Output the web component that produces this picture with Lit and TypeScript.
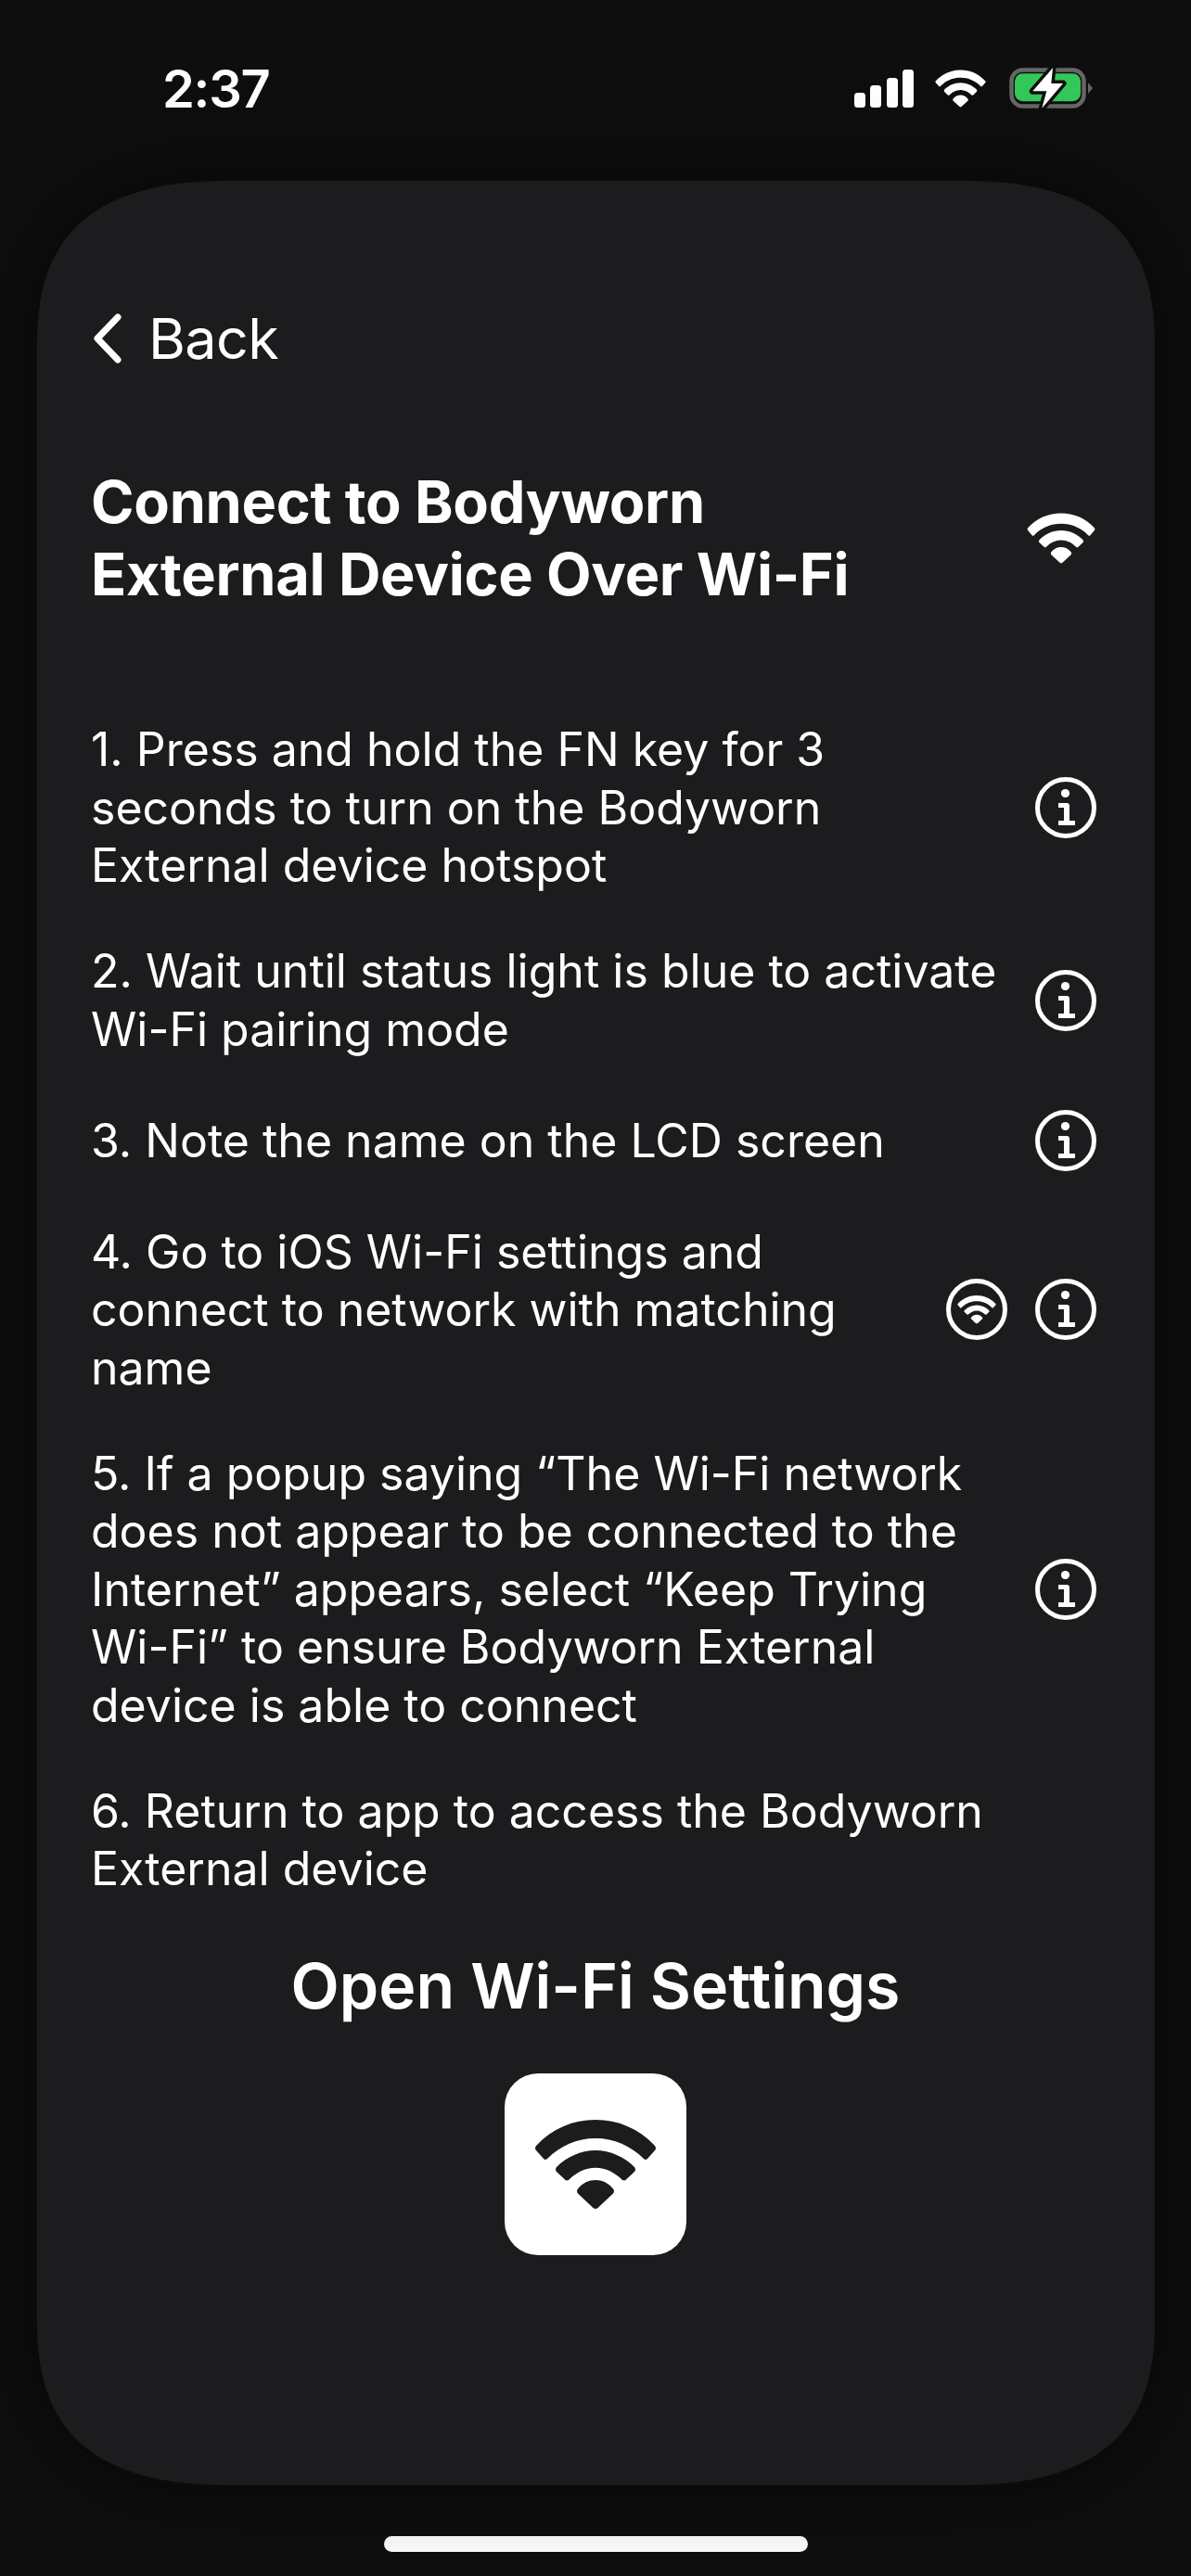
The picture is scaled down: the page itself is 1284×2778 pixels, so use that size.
import { LitElement, css, html, svg } from "lit";
import { customElement } from "lit/decorators.js";

const WIFI_PATHS = svg`
  <path d="M2 28C20 9 42 0 66 0C90 0 112 9 130 28Q132 31 130 33L122 42Q120 44 118 42C104 28 86 20 66 20C46 20 28 28 14 42Q12 44 10 42L2 33Q0 31 2 28Z"/>
  <path d="M24 51C35 40 50 33 66 33C82 33 97 40 108 51Q110 54 108 56L99 64.5Q97 66.5 94.5 64.5C87 57 77 51.7 66 51.7C55 51.7 45 57 37.5 64.5Q35 66.5 33 64.5L24 56Q22 54 24 51Z"/>
  <path d="M47 74.5C52 68 59 65 66 65C73 65 80 68 85 74.5Q87 77 85 79.5L68.5 95Q66 97 63.5 95L47 79.5Q45 77 47 74.5Z"/>
`;

const wifi = (cls: string) =>
  html`<svg class=${cls} viewBox="0 0 132 96" fill="currentColor">${WIFI_PATHS}</svg>`;

const infoIcon = html`<svg class="round" viewBox="0 0 66 66" fill="none">
  <circle cx="33" cy="33" r="30.5" stroke="currentColor" stroke-width="5"/>
  <circle cx="32.5" cy="17.5" r="4.6" fill="currentColor"/>
  <path d="M25 28H34Q37 28 37 31V47H43V52H25V47H31V33H25Z" fill="currentColor"/>
</svg>`;

const wifiRound = html`<svg class="round" viewBox="0 0 66 66" fill="none">
  <circle cx="33" cy="33" r="30.5" stroke="currentColor" stroke-width="5"/>
  <svg x="12" y="18" width="42" height="30.5" viewBox="0 0 132 96" fill="currentColor">${WIFI_PATHS}</svg>
</svg>`;

const STEPS = [
  { lines: ["1. Press and hold the FN key for 3", "seconds to turn on the Bodyworn", "External device hotspot"], info: true },
  { lines: ["2. Wait until status light is blue to activate", "Wi-Fi pairing mode"], info: true },
  { lines: ["3. Note the name on the LCD screen"], info: true },
  { lines: ["4. Go to iOS Wi-Fi settings and", "connect to network with matching", "name"], info: true, wifi: true },
  {
    lines: [
      "5. If a popup saying “The Wi-Fi network",
      "does not appear to be connected to the",
      "Internet” appears, select “Keep Trying",
      "Wi-Fi” to ensure Bodyworn External",
      "device is able to connect",
    ],
    info: true,
  },
  { lines: ["6. Return to app to access the Bodyworn", "External device"] },
];

@customElement("app-root")
export class AppRoot extends LitElement {
  static styles = css`
    :host {
      display: block;
      width: 1284px;
      height: 2778px;
      background: #0e0e0e;
      color: #fff;
      font-family: Inter, "Liberation Sans", sans-serif;
      overflow: hidden;
    }
    .status {
      height: 195px;
      box-sizing: border-box;
      padding: 0 106px 0 175px;
      display: flex;
      justify-content: space-between;
      align-items: flex-start;
    }
    .time {
      font-size: 56px;
      font-weight: 600;
      line-height: 68px;
      margin-top: 62px;
      letter-spacing: -1.3px;
    }
    .indicators {
      display: flex;
      align-items: flex-start;
      margin-top: 72px;
    }
    .signal { width: 64px; height: 41px; margin-top: 3px; }
    .status-wifi { width: 55px; height: 41px; margin: 3px 0 0 23px; }
    .battery { width: 90px; height: 48px; margin-left: 25px; }
    .shadow {
      filter: drop-shadow(0 0 45px rgba(0, 0, 0, 0.55));
    }
    .card {
      margin-left: 40px;
      width: 1205px;
      height: 2485px;
      box-sizing: border-box;
      padding: 140px 63px 0 58px;
      background: #1c1c1e;
      /* continuous corners, plain border-radius comes out too round */
      clip-path: path("M0 175C0 80 38 0 205 0H1000C1167 0 1205 80 1205 175V2310C1205 2405 1167 2485 1000 2485H205C38 2485 0 2405 0 2310Z");
      display: flex;
      flex-direction: column;
    }
    .back {
      display: flex;
      align-items: center;
      gap: 28px;
      height: 60px;
      font-size: 61px;
      letter-spacing: -0.6px;
    }
    .chevron { width: 32px; height: 54px; margin-left: 2px; }
    .head {
      margin-top: 107px;
      display: flex;
      align-items: center;
      justify-content: space-between;
    }
    h1 {
      margin: 0;
      font-size: 63px;
      line-height: 78px;
      font-weight: 700;
      letter-spacing: -0.3px;
    }
    .head-wifi { width: 74px; height: 55px; margin-right: 1px; }
    .steps {
      margin-top: 119px;
      display: flex;
      flex-direction: column;
      gap: 51.5px;
    }
    .step {
      display: flex;
      align-items: center;
      gap: 30px;
    }
    .text {
      flex: 1;
      font-size: 50px;
      line-height: 62.5px;
      white-space: nowrap;
    }
    .icon-slot {
      height: 74.5px;
      display: flex;
      align-items: center;
    }
    .round { width: 66px; height: 66px; }
    .lower {
      padding-left: 4px;
    }
    .open {
      margin-top: 54px;
      text-align: center;
      font-size: 68px;
      line-height: 80px;
      font-weight: 600;
    }
    .button {
      margin: 55px auto 0;
      width: 196px;
      height: 196px;
      border-radius: 36px;
      background: #fff;
      color: #1c1c1e;
      display: flex;
      align-items: center;
      justify-content: center;
    }
    .button-wifi { width: 132px; height: 96px; }
    .home {
      display: flex;
      justify-content: center;
      padding-top: 55px;
    }
    .bar {
      width: 457px;
      height: 17px;
      border-radius: 9px;
      background: #fff;
    }
  `;

  render() {
    return html`
      <div class="status">
        <div class="time">2:37</div>
        <div class="indicators">
          <svg class="signal" viewBox="0 0 64 41" fill="#fff">
            <rect x="0" y="25" width="12" height="16" rx="3.5"/>
            <rect x="17" y="17" width="12" height="24" rx="3.5"/>
            <rect x="35" y="9" width="12" height="32" rx="3.5"/>
            <rect x="52" y="0" width="12" height="41" rx="3.5"/>
          </svg>
          ${wifi("status-wifi")}
          <svg class="battery" viewBox="0 0 90 48" fill="none">
            <rect x="2.5" y="3.5" width="78" height="39" rx="12" stroke="#666" stroke-width="4.5"/>
            <rect x="6" y="7.3" width="71" height="30" rx="8.5" fill="#34c759"/>
            <path d="M85 17L90 23L85 29Z" fill="#666"/>
            <path d="M47 1.3L25.3 26.3H40.3L35.3 44.7L58 18H45.3Z" fill="#fff" stroke="#0e0e0e" stroke-width="7" stroke-linejoin="round" paint-order="stroke"/>
          </svg>
        </div>
      </div>

      <div class="shadow">
        <div class="card">
          <div class="back">
            <svg class="chevron" viewBox="0 0 32 54" fill="none">
              <path d="M27 4L5 27L27 50" stroke="#fff" stroke-width="7" stroke-linecap="round" stroke-linejoin="round"/>
            </svg>
            <span>Back</span>
          </div>

          <div class="head">
            <h1>Connect to Bodyworn<br />External Device Over Wi-Fi</h1>
            ${wifi("head-wifi")}
          </div>

          <div class="steps">
            ${STEPS.map(
              (s) => html`
                <div class="step">
                  <div class="text">${s.lines.map((l, i) => html`${i ? html`<br />` : ""}${l}`)}</div>
                  ${s.wifi ? html`<div class="icon-slot">${wifiRound}</div>` : ""}
                  ${s.info ? html`<div class="icon-slot">${infoIcon}</div>` : ""}
                </div>
              `
            )}
          </div>

          <div class="lower">
            <div class="open">Open Wi-Fi Settings</div>
            <div class="button">${wifi("button-wifi")}</div>
          </div>
        </div>
      </div>

      <div class="home"><div class="bar"></div></div>
    `;
  }
}
